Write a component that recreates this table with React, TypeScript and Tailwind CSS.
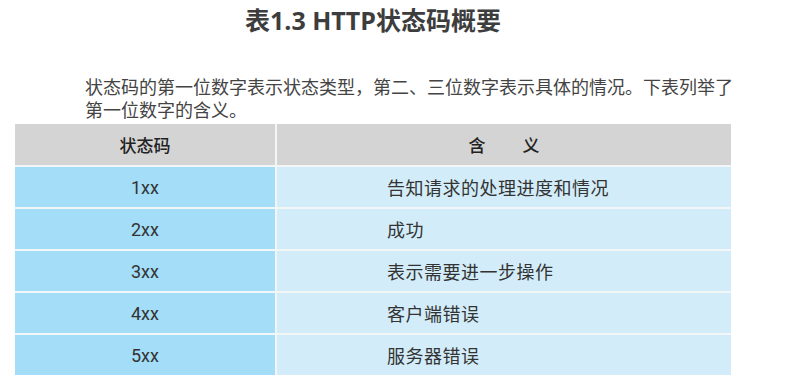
import React from "react";

const rows: [string, string][] = [
  ["1xx", "告知请求的处理进度和情况"],
  ["2xx", "成功"],
  ["3xx", "表示需要进一步操作"],
  ["4xx", "客户端错误"],
  ["5xx", "服务器错误"],
];

export default function App() {
  return (
    <div className="w-[786px] h-[380px] bg-white overflow-hidden font-['Noto_Sans_CJK_SC',sans-serif]">
      <h1 className="ml-[15px] w-[716px] pt-[4px] text-center text-[25px] leading-[32px] font-bold text-[#3d3d3d] font-['Open_Sans','Noto_Sans_CJK_SC',sans-serif]">
        表1.3 HTTP状态码概要
      </h1>
      <p className="ml-[85px] mt-[39px] text-[18px] leading-[23px] text-[#444] whitespace-nowrap">
        状态码的第一位数字表示状态类型，第二、三位数字表示具体的情况。下表列举了
        <br />
        第一位数字的含义。
      </p>
      <div className="ml-[15px] mt-[3px] w-[716px] grid grid-cols-[260px_454px] gap-[2px] bg-[#f3f6f7]">
        <div className="h-[41px] bg-[#d4d4d4] flex items-center justify-center text-[17px] font-medium text-[#222]">
          状态码
        </div>
        <div className="h-[41px] bg-[#d4d4d4] flex items-center justify-center gap-[37px] text-[17px] font-medium text-[#222]">
          <span>含</span>
          <span>义</span>
        </div>
        {rows.map(([code, desc]) => (
          <React.Fragment key={code}>
            <div className="h-[40px] bg-[#a3ddf7] flex items-center justify-center text-[18px] text-[#333] font-['Roboto',sans-serif]">
              {code}
            </div>
            <div className="h-[40px] bg-[#d2edf9] flex items-center pl-[110px] text-[18px] tracking-[0.5px] text-[#333]">
              {desc}
            </div>
          </React.Fragment>
        ))}
      </div>
    </div>
  );
}
